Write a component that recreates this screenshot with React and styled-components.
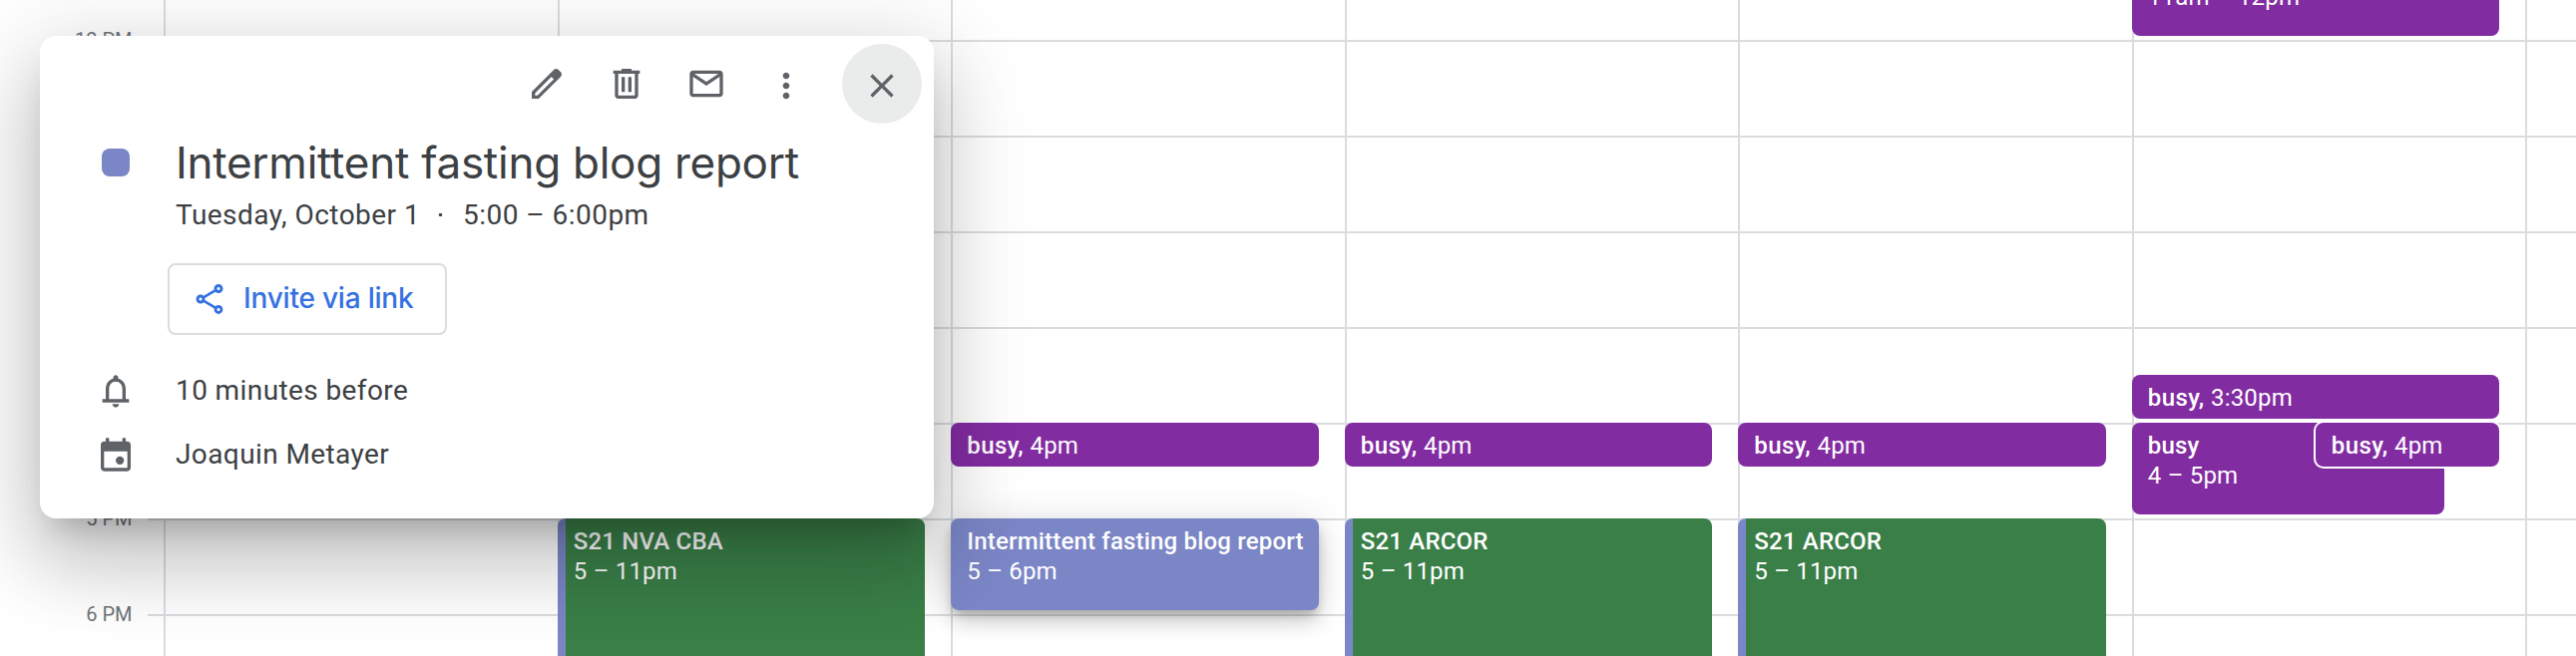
import React from "react";
import styled, { createGlobalStyle } from "styled-components";

const line = "#dadce0";

const GlobalStyle = createGlobalStyle`
  body { margin: 0; background: #fff; }
  * { box-sizing: border-box; }
`;

const Screen = styled.main`
  position: relative;
  width: 2582px;
  height: 658px;
  overflow: hidden;
  display: flex;
  background: #fff;
  font-family: Roboto, "Liberation Sans", sans-serif;
`;

const HourGutter = styled.div`
  flex: none;
  width: 148px;
  margin-top: -8px;
`;

const HourLabel = styled.div`
  height: 96px;
  display: flex;
  align-items: center;
  justify-content: flex-end;
  padding-right: 15.5px;
  font-size: 20px;
  line-height: 20px;
  color: #70757a;
`;

const Week = styled.div`
  flex: none;
  display: flex;
  width: 2450px;
  height: 768px;
  margin-top: -56px;
  padding-left: 16.3px;
  background: repeating-linear-gradient(to bottom, ${line} 0 2px, transparent 2px 96px);
`;

const Day = styled.div`
  flex: none;
  width: 394.5px;
  display: grid;
  grid-template-columns: 100%;
  grid-template-rows: repeat(16, 48px);
  border-left: 2px solid ${line};
`;

const Event = styled.article`
  grid-column: 1;
  grid-row: ${(p) => p.$slot} / span ${(p) => p.$span};
  width: ${(p) => p.$width || "368.4px"};
  margin: 0 0 4px ${(p) => p.$indent || "-2px"};
  padding: 8px 0 0 16px;
  border-radius: 8px;
  background: ${(p) => p.$tone};
  color: #fff;
  font-size: 24px;
  line-height: 30px;
  letter-spacing: 0.2px;
  white-space: nowrap;
  box-shadow: ${(p) => p.$shadow || "none"};
`;

const EventName = styled.span`
  display: ${(p) => (p.$inline ? "inline" : "block")};
  font-weight: 500;
  letter-spacing: ${(p) => (p.$inline ? "0.4px" : "0.18px")};
`;

const Popup = styled.section`
  position: absolute;
  left: 40px;
  top: 36px;
  width: 896px;
  height: 484px;
  padding-top: 8px;
  border-radius: 16px;
  background: #fff;
  color: #3c4043;
  box-shadow: 0 48px 76px 6px rgba(0, 0, 0, 0.14), 0 18px 92px 16px rgba(0, 0, 0, 0.12),
    0 22px 30px -14px rgba(0, 0, 0, 0.2);
`;

const Toolbar = styled.div`
  height: 80px;
  display: flex;
  justify-content: flex-end;
  padding-right: 12px;
`;

const IconButton = styled.button`
  width: 80px;
  height: 80px;
  padding: ${(p) => p.$drop || "0"} 0 0;
  margin: 0 0 0 ${(p) => p.$gap || "0"};
  border: 0;
  border-radius: 50%;
  display: flex;
  align-items: center;
  justify-content: center;
  background: ${(p) => (p.$active ? "#eaeceb" : "transparent")};
`;

const Icon = styled.svg`
  display: block;
  flex: none;
  width: ${(p) => p.$size || 40}px;
  height: ${(p) => p.$size || 40}px;
  fill: ${(p) => p.$color || "#5f6368"};
`;

const Heading = styled.div`
  display: grid;
  grid-template-columns: 136px 1fr;
  margin-top: 11px;
`;

const Swatch = styled.span`
  width: 28px;
  height: 28px;
  margin: 14px 0 0 62px;
  border-radius: 8px;
  background: #7b86c6;
`;

const Title = styled.h1`
  margin: 0;
  font-family: Inter, sans-serif;
  font-size: 44px;
  line-height: 56px;
  font-weight: 400;
  letter-spacing: -0.265px;
  white-space: nowrap;
`;

const When = styled.p`
  grid-column: 2;
  display: grid;
  grid-template-columns: 244px 44px auto;
  margin: 5px 0 0;
  font-size: 28px;
  line-height: 40px;
  letter-spacing: 0.47px;
  white-space: nowrap;
`;

const Dot = styled.span`
  text-align: center;
`;

const InviteButton = styled.button`
  width: 280px;
  height: 72px;
  margin: 28px 0 0 128px;
  padding: 0 0 0 22px;
  display: flex;
  align-items: center;
  gap: 16px;
  border: 2px solid ${line};
  border-radius: 8px;
  background: #fff;
  color: #3571e1;
  font: 500 28px/40px Inter, sans-serif;
  letter-spacing: -0.2px;
  white-space: nowrap;
`;

const InviteLabel = styled.span`
  margin-bottom: 2px;
`;

const Details = styled.div`
  margin-top: 36px;
`;

const Detail = styled.div`
  height: 64px;
  display: grid;
  grid-template-columns: 80px 1fr;
  padding-left: 56px;
  font-size: 28px;
  line-height: 40px;
  letter-spacing: 0.4px;
`;

const purple = "#822ca2";
const green = "linear-gradient(to right, #7b86c6 8px, #3a7f48 8px)";
const lavender = "#7b86c6";
const lifted =
  "0 12px 20px 0 rgba(0,0,0,.14), 0 2px 36px 0 rgba(0,0,0,.12), 0 6px 10px -2px rgba(0,0,0,.2)";

const hours = ["12 PM", "1 PM", "2 PM", "3 PM", "4 PM", "5 PM", "6 PM"];

const shortBusy = { name: "busy", time: "4pm", slot: 11, span: 1, tone: purple, inline: true };
const days = [
  [],
  [{ name: "S21 NVA CBA", time: "5 – 11pm", slot: 13, span: 4, tone: green }],
  [
    shortBusy,
    { name: "Intermittent fasting blog report", time: "5 – 6pm", slot: 13, span: 2, tone: lavender, shadow: lifted },
  ],
  [shortBusy, { name: "S21 ARCOR", time: "5 – 11pm", slot: 13, span: 4, tone: green }],
  [shortBusy, { name: "S21 ARCOR", time: "5 – 11pm", slot: 13, span: 4, tone: green }],
  [
    { name: "busy", time: "11am – 12pm", slot: 1, span: 2, tone: purple },
    { ...shortBusy, time: "3:30pm", slot: 10 },
    { name: "busy", time: "4 – 5pm", slot: 11, span: 2, tone: purple, width: "313px" },
    { ...shortBusy, width: "184.4px", indent: "182px", shadow: "0 0 0 2px #fff" },
  ],
  [],
];

const tools = [
  {
    label: "Edit",
    d: "M20.41 4.94l-1.35-1.35c-.78-.78-2.05-.78-2.83 0L3 16.82V21h4.18L20.41 7.77c.79-.78.79-2.05 0-2.83zm-14 14.12L5 19v-1.36l9.82-9.82 1.41 1.41-9.82 9.83z",
  },
  {
    label: "Delete",
    d: "M15 4V3H9v1H4v2h1v13c0 1.1.9 2 2 2h10c1.1 0 2-.9 2-2V6h1V4h-5zm2 15H7V6h10v13zM9 8h2v9H9zm4 0h2v9h-2z",
  },
  {
    label: "Email",
    d: "M20 4H4c-1.1 0-2 .9-2 2v12c0 1.1.9 2 2 2h16c1.1 0 2-.9 2-2V6c0-1.1-.9-2-2-2zm-.8 2L12 10.8 4.8 6h14.4zM4 18V7.87l8 5.33 8-5.33V18H4z",
  },
  {
    label: "Options",
    drop: "4px",
    d: "M12 8c1.1 0 2-.9 2-2s-.9-2-2-2-2 .9-2 2 .9 2 2 2zm0 2c-1.1 0-2 .9-2 2s.9 2 2 2 2-.9 2-2-.9-2-2-2zm0 6c-1.1 0-2 .9-2 2s.9 2 2 2 2-.9 2-2-.9-2-2-2z",
  },
  {
    label: "Close",
    drop: "4px",
    gap: "16px",
    active: true,
    d: "M19 6.41L17.59 5 12 10.59 6.41 5 5 6.41 10.59 12 5 17.59 6.41 19 12 13.41 17.59 19 19 17.59 13.41 12z",
  },
];

const shareIcon =
  "M18 16.08c-.76 0-1.44.3-1.96.77L8.91 12.7c.05-.23.09-.46.09-.7s-.04-.47-.09-.7l7.05-4.11c.54.5 1.25.81 2.04.81 1.66 0 3-1.34 3-3s-1.34-3-3-3-3 1.34-3 3c0 .24.04.47.09.7L8.04 9.81C7.5 9.31 6.79 9 6 9c-1.66 0-3 1.34-3 3s1.34 3 3 3c.79 0 1.5-.31 2.04-.81l7.12 4.16c-.05.21-.08.43-.08.65 0 1.61 1.31 2.92 2.92 2.92s2.92-1.31 2.92-2.92-1.31-2.92-2.92-2.92zM18 4c.55 0 1 .45 1 1s-.45 1-1 1-1-.45-1-1 .45-1 1-1zM6 13c-.55 0-1-.45-1-1s.45-1 1-1 1 .45 1 1-.45 1-1 1zm12 7.02c-.55 0-1-.45-1-1s.45-1 1-1 1 .45 1 1-.45 1-1 1z";
const bellIcon =
  "M18 17v-6c0-3.07-1.63-5.64-4.5-6.32V4c0-.83-.67-1.5-1.5-1.5s-1.5.67-1.5 1.5v.68C7.64 5.36 6 7.92 6 11v6H4v2h16v-2h-2zm-2 0H8v-6c0-2.48 1.51-4.5 4-4.5s4 2.02 4 4.5v6zm-4 5c1.1 0 2-.9 2-2h-4c0 1.1.9 2 2 2z";
const calendarIcon =
  "M19 4h-1V2h-2v2H8V2H6v2H5c-1.1 0-2 .9-2 2v14c0 1.1.9 2 2 2h14c1.1 0 2-.9 2-2V6c0-1.1-.9-2-2-2zm0 16H5V10h14v10zm-4.5-7a2.5 2.5 0 1 0 0 5 2.5 2.5 0 0 0 0-5z";

const Glyph = ({ d, size, color }) => (
  <Icon viewBox="0 0 24 24" $size={size} $color={color} aria-hidden="true">
    <path d={d} />
  </Icon>
);

export default function App() {
  return (
    <>
      <GlobalStyle />
      <Screen>
        <HourGutter>
          {hours.map((h) => (
            <HourLabel key={h}>{h}</HourLabel>
          ))}
        </HourGutter>
        <Week>
          {days.map((events, i) => (
            <Day key={i}>
              {events.map((e, j) => (
                <Event
                  key={j}
                  $slot={e.slot}
                  $span={e.span}
                  $tone={e.tone}
                  $width={e.width}
                  $indent={e.indent}
                  $shadow={e.shadow}
                >
                  <EventName $inline={e.inline}>{e.inline ? `${e.name}, ` : e.name}</EventName>
                  {e.time}
                </Event>
              ))}
            </Day>
          ))}
        </Week>
        <Popup>
          <Toolbar>
            {tools.map((t) => (
              <IconButton key={t.label} aria-label={t.label} $drop={t.drop} $gap={t.gap} $active={t.active}>
                <Glyph d={t.d} />
              </IconButton>
            ))}
          </Toolbar>
          <Heading>
            <Swatch />
            <Title>Intermittent fasting blog report</Title>
            <When>
              <span>Tuesday, October 1</span>
              <Dot>⋅</Dot>
              <span>5:00 – 6:00pm</span>
            </When>
          </Heading>
          <InviteButton>
            <Glyph d={shareIcon} size={36} color="#3571e1" />
            <InviteLabel>Invite via link</InviteLabel>
          </InviteButton>
          <Details>
            <Detail>
              <Glyph d={bellIcon} />
              <span>10 minutes before</span>
            </Detail>
            <Detail>
              <Glyph d={calendarIcon} />
              <span>Joaquin Metayer</span>
            </Detail>
          </Details>
        </Popup>
      </Screen>
    </>
  );
}
